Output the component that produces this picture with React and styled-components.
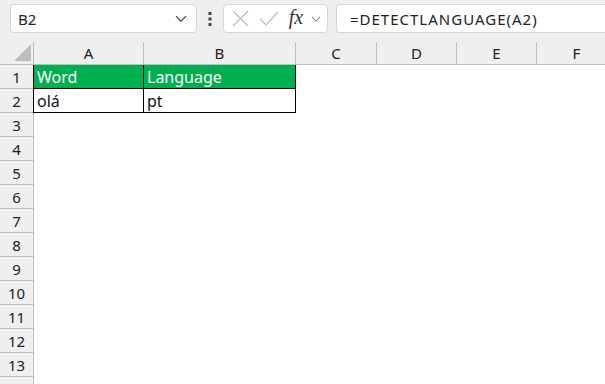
import React from 'react';
import styled, { createGlobalStyle } from 'styled-components';

const GlobalStyle = createGlobalStyle`
    body {
        margin: 0;
        background: #fff;
        font-family: "Noto Sans", "Open Sans", sans-serif;
    }
`;

const Page = styled.div`
    width: 605px;
    height: 384px;
    overflow: hidden;
    display: flex;
    flex-direction: column;
`;

const TopBar = styled.div`
    height: 42px;
    flex: none;
    box-sizing: border-box;
    background: #efefef;
    display: flex;
    align-items: flex-start;
    padding: 4px 0 0 10px;
`;

const Box = styled.div`
    height: 29px;
    box-sizing: border-box;
    background: #fff;
    border: 1px solid #d6d6d6;
    border-radius: 4px;
    display: flex;
    align-items: center;
    width: ${p => p.$w || 'auto'};
    flex: ${p => p.$grow ? 1 : 'none'};
`;

const FormulaBox = styled(Box)`
    margin-left: 8px;
    border-right: none;
    border-top-right-radius: 0;
    border-bottom-right-radius: 0;
`;

const NameText = styled.span`
    flex: 1;
    padding-left: 7px;
    font-size: 15px;
    color: #222;
`;

const Dots = styled.div`
    width: 26px;
    height: 29px;
    display: flex;
    align-items: center;
    justify-content: center;
`;

const FormulaText = styled.span`
    padding-left: 13px;
    font-size: 15px;
    letter-spacing: 1px;
    color: #222;
    white-space: nowrap;
`;

const IconSlot = styled.div`
    display: flex;
    align-items: center;
    justify-content: center;
    width: ${p => p.$w}px;
`;

const Fx = styled.span`
    font-family: "Liberation Serif", "DejaVu Serif", serif;
    font-style: italic;
    font-size: 20px;
    color: #333;
    margin-top: -3px;
`;

const Grid = styled.div`
    display: grid;
    grid-template-columns: 34px 110px 152px 81px 80px 80px 80px;
    grid-template-rows: 23px repeat(14, 24px);
`;

const Corner = styled.div`
    background: #efefef;
    border-right: 1px solid #bdbdbd;
    border-bottom: 1px solid #bdbdbd;
    display: flex;
    align-items: flex-end;
    justify-content: flex-end;
    padding: 0 2px 3px 0;
    box-sizing: border-box;
`;

const ColHead = styled.div`
    background: #efefef;
    border-right: 1px solid #bdbdbd;
    border-bottom: 1px solid #bdbdbd;
    box-sizing: border-box;
    display: flex;
    align-items: center;
    justify-content: center;
    font-size: 15px;
    color: #222;
`;

const RowHead = styled.div`
    background: #efefef;
    border-right: 1px solid #bdbdbd;
    border-bottom: 1px solid #bdbdbd;
    box-sizing: border-box;
    display: flex;
    align-items: center;
    justify-content: center;
    font-size: 15px;
    color: #222;
`;

const Cell = styled.div`
    box-sizing: border-box;
    display: flex;
    align-items: center;
    padding-left: 3px;
    font-size: 16px;
    background: ${p => p.$head ? '#00b050' : '#fff'};
    color: ${p => p.$head ? '#fff' : '#111'};
    border-right: ${p => p.$table ? '1px solid #000' : 'none'};
    border-bottom: ${p => p.$table ? '1px solid #000' : 'none'};
    border-left: ${p => p.$first ? '1px solid #000' : 'none'};
    margin-left: ${p => p.$first ? '-1px' : '0'};
`;

const cols = ['A', 'B', 'C', 'D', 'E', 'F'];
const data = {
    1: ['Word', 'Language'],
    2: ['olá', 'pt'],
};

const Chevron = ({ size = 12, color = '#444' }) => (
    <svg width={size} height={size * 0.6} viewBox="0 0 12 7">
        <path d="M1 1l5 5 5-5" fill="none" stroke={color} strokeWidth="1.3" />
    </svg>
);

const App = () => (
    <Page>
        <GlobalStyle />
        <TopBar>
            <Box $w="187px">
                <NameText>B2</NameText>
                <IconSlot $w={30}><Chevron /></IconSlot>
            </Box>
            <Dots>
                <svg width="4" height="14" viewBox="0 0 4 14">
                    <rect x="0.5" y="0" width="3" height="3" fill="#444" />
                    <rect x="0.5" y="5.5" width="3" height="3" fill="#444" />
                    <rect x="0.5" y="11" width="3" height="3" fill="#444" />
                </svg>
            </Dots>
            <Box $w="105px">
                <IconSlot $w={32}>
                    <svg width="17" height="17" viewBox="0 0 17 17">
                        <path d="M1 1l15 15M16 1L1 16" stroke="#bcbcbc" strokeWidth="1.2" />
                    </svg>
                </IconSlot>
                <IconSlot $w={26}>
                    <svg width="20" height="15" viewBox="0 0 20 15">
                        <path d="M1 8l6 6L19 1" fill="none" stroke="#bcbcbc" strokeWidth="1.2" />
                    </svg>
                </IconSlot>
                <IconSlot $w={28}><Fx>fx</Fx></IconSlot>
                <IconSlot $w={12}><Chevron size={10} color="#888" /></IconSlot>
            </Box>
            <FormulaBox $grow>
                <FormulaText>=DETECTLANGUAGE(A2)</FormulaText>
            </FormulaBox>
        </TopBar>
        <Grid>
            <Corner>
                <svg width="17" height="17" viewBox="0 0 17 17">
                    <path d="M17 0V17H0Z" fill="#bdbdbd" />
                </svg>
            </Corner>
            {cols.map((c, i) => <ColHead key={i}>{c}</ColHead>)}
            {Array.from({ length: 14 }, (_, r) => {
                const row = r + 1;
                const vals = data[row];
                return (
                    <React.Fragment key={row}>
                        <RowHead>{row < 14 ? row : ''}</RowHead>
                        {cols.map((c, i) => (
                            <Cell
                                key={i}
                                $head={row === 1 && i < 2}
                                $table={vals && i < 2}
                                $first={vals && i === 0}
                            >
                                {vals && i < 2 ? vals[i] : ''}
                            </Cell>
                        ))}
                    </React.Fragment>
                );
            })}
        </Grid>
    </Page>
);

export default App;
